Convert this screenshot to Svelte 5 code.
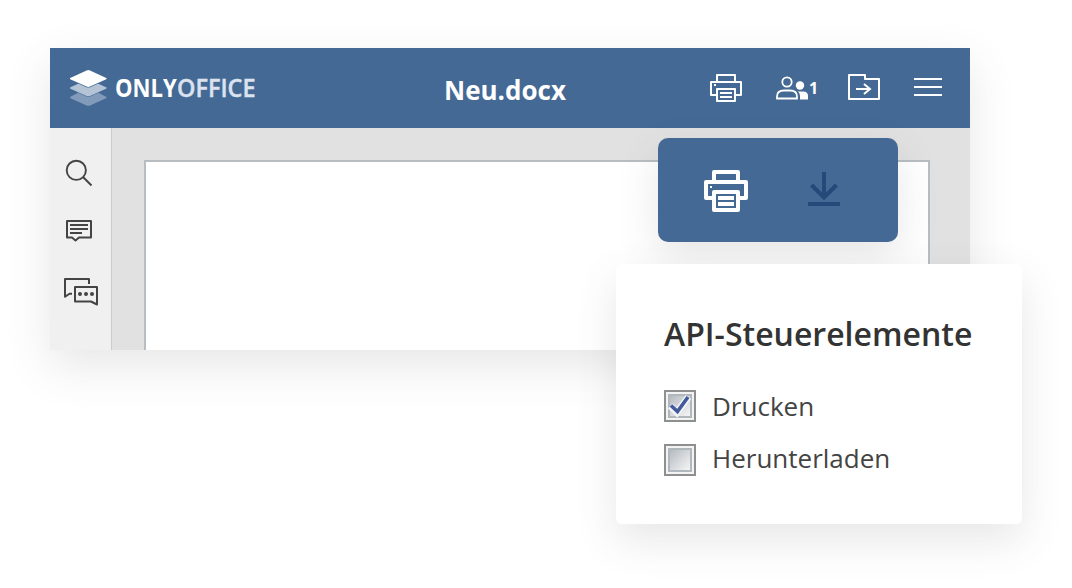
<script>
  let options = $state([
    { label: 'Drucken', checked: true },
    { label: 'Herunterladen', checked: false }
  ]);
</script>

<main class="stage">
  <section class="editor">
    <header class="toolbar">
      <div class="brand">
        <svg class="stack" width="38" height="38" viewBox="0 0 38 38">
          <path d="M1 28 L19.3 18.5 L37.500 28 Q38 28.600 37 29.200 L21 36.400 Q19.300 37.200 17.600 36.400 L1.500 29.200 Q.5 28.600 1 28Z" fill="#829bba" />
          <path d="M1 18.500 L19.300 10 L37.500 18.500 Q38 19.200 37 19.800 L21 27 Q19.300 27.700 17.600 27 L1.500 19.800 Q.5 19.200 1 18.500Z" fill="#b4c3d5" stroke="#446995" stroke-width="1.200" paint-order="stroke" />
          <path d="M1.200 9 L17.600 1.400 Q19.300 .6 21 1.400 L37.300 9 Q38 9.600 37.300 10.200 L21 17.600 Q19.300 18.400 17.600 17.600 L1.200 10.200 Q.5 9.600 1.200 9Z" fill="#fff" stroke="#446995" stroke-width="1.200" paint-order="stroke" />
        </svg>
        <svg class="wordmark" width="150" height="40" viewBox="0 0 150 40">
          <text class="strong" x="0" y="28" textLength="61.800" lengthAdjust="spacingAndGlyphs" fill="#fff">ONLY</text>
          <text x="62" y="28" textLength="78.500" lengthAdjust="spacingAndGlyphs" fill="#dce2ee" stroke="#dce2ee" stroke-width="0.400">OFFICE</text>
        </svg>
      </div>
      <h1>Neu.docx</h1>
      <nav>
        <svg width="32" height="28" viewBox="0 0 32 28" fill="none" stroke="#fff" stroke-width="2" stroke-linejoin="round">
          <path d="M7 8V1H25V8M7 21H1V8H31V21H25" />
          <path d="M7 15H25V27H7ZM10 19H22M10 23H22" />
          <path d="M4 11H6" />
        </svg>
        <div class="users">
          <svg width="33" height="24" viewBox="0 0 33 24">
            <circle cx="11" cy="6" r="4.700" fill="none" stroke="#fff" stroke-width="1.800" />
            <path d="M1 22.500V20.500C1 16.500 4 14.500 8 14.500H14C18 14.500 21 16.500 21 20.500V22.500Z" fill="none" stroke="#fff" stroke-width="1.800" />
            <circle cx="24" cy="9.500" r="4.200" fill="#fff" />
            <path d="M21.800 15.500H27C30.500 15.500 32 17.200 32 19.500V23.400H24V20.500C24 18 23.200 16.500 21.800 15.500Z" fill="#fff" />
          </svg>
          <span>1</span>
        </div>
        <svg class="folder" width="32" height="26" viewBox="0 0 32 26" fill="none" stroke="#fff" stroke-width="2" stroke-linejoin="round">
          <path d="M1 1H17V5H31V25H1Z" />
          <path d="M8 15H22M16 10L22 15L16 20" stroke-linejoin="miter" />
        </svg>
        <svg class="menu" width="28" height="18" viewBox="0 0 28 18" stroke="#fff" stroke-width="2">
          <path d="M0 1H28M0 9H28M0 17H28" />
        </svg>
      </nav>
    </header>
    <div class="workspace">
      <aside>
        <svg width="28" height="28" viewBox="0 0 28 28" fill="none" stroke="#444" stroke-width="1.900">
          <circle cx="11.300" cy="11.300" r="9.600" />
          <path d="M18 18L26.500 26.500" />
        </svg>
        <svg class="comment" width="28" height="22" viewBox="0 0 28 22" fill="none" stroke="#444" stroke-width="2" stroke-linejoin="round">
          <path d="M2 1H26V17.500H14L10.500 20.500L7 17.500H2Z" />
          <path d="M5 5H23M5 9H23M5 13H17" />
        </svg>
        <svg class="chat" width="34" height="28" viewBox="0 0 34 28" fill="none" stroke="#444" stroke-width="2" stroke-linejoin="round">
          <path d="M25 6V1H1V18.800L5.500 15.700H8" />
          <path d="M11 9H33V26.500L27 23.500H11Z" />
          <g fill="#444" stroke="none"><circle cx="16" cy="16" r="2" /><circle cx="22" cy="16" r="2" /><circle cx="28" cy="16" r="2" /></g>
        </svg>
      </aside>
      <div class="canvas"><div class="page"></div></div>
    </div>
  </section>

  <div class="popup">
    <svg width="44" height="42" viewBox="0 0 44 42" fill="none" stroke="#fff" stroke-width="4" stroke-linejoin="round">
      <path d="M10 12V2H34V12M10 28V38M10 28H2V12H42V28H34" />
      <path d="M10 22H34V40H10Z" />
      <path d="M14 28H30M14 34H30" />
      <path d="M6 17H8" stroke-width="2" />
    </svg>
    <svg class="download" width="32" height="34" viewBox="0 0 32 34" fill="none" stroke="#254a7a" stroke-width="4">
      <path d="M16 0V26M3.500 13L16 25.500L28.500 13M0 32H32" />
    </svg>
  </div>

  <section class="card">
    <h2>API-Steuerelemente</h2>
    <div class="options">
      {#each options as option}
        <button class="option" onclick={() => (option.checked = !option.checked)}>
          <span class="box">
            <span class="well"></span>
            {#if option.checked}
              <svg class="tick" width="28" height="28" viewBox="0 0 28 28" fill="none">
                <path d="M4.500 14L11 20.500L22.500 5" stroke="#f3f4f6" stroke-width="7" />
                <path d="M5 13.500L11.500 19.500L22 5" stroke="#435b9c" stroke-width="3.600" />
              </svg>
            {/if}
          </span>
          <span class="label">{option.label}</span>
        </button>
      {/each}
    </div>
  </section>
</main>

<style>
  :global(body) { margin: 0; background: #fff; }
  svg { display: block; flex: none; }
  h1, h2 { margin: 0; }
  .stage {
    --shadow: 0 16px 42px rgba(85, 85, 85, 0.14);
    position: relative;
    box-sizing: border-box;
    width: 1072px;
    height: 588px;
    padding: 48px 102px 0 50px;
    overflow: hidden;
    font-family: "Open Sans", "Noto Sans", sans-serif;
    color: #444;
  }
  .editor {
    height: 302px;
    display: flex;
    flex-direction: column;
    box-shadow: var(--shadow);
  }
  .toolbar {
    box-sizing: border-box;
    height: 80px;
    flex: none;
    display: grid;
    grid-template-columns: 1fr auto 1fr;
    align-items: center;
    padding: 0 28px 0 19px;
    background: #446995;
    color: #fff;
  }
  .brand { display: flex; align-items: center; gap: 8px; }
  .wordmark { font: 600 25px "Open Sans", sans-serif; margin-top: 2px; overflow: visible; }
  .strong { font-weight: 700; }
  h1 { font-size: 26px; line-height: 36px; font-weight: 700; padding-top: 3px; margin-left: -1px; }
  nav { display: flex; align-items: center; justify-content: flex-end; }
  .users { display: flex; align-items: center; margin-left: 34px; width: 72px; }
  .users span { font-size: 16px; line-height: 20px; font-weight: 700; margin-left: 0; }
  .folder { margin-top: -2px; }
  .menu { margin: -2px 0 0 34px; }
  .workspace { flex: 1; min-height: 0; display: flex; }
  aside {
    box-sizing: border-box;
    width: 62px;
    padding: 31px 0 0 14px;
    display: flex;
    flex-direction: column;
    background: #f0f0f0;
    border-right: 1px solid #c9cbcd;
  }
  aside svg:first-child { margin-left: 1px; }
  .comment { margin: 33px 0 0 1px; }
  .chat { margin-top: 36px; }
  .canvas { flex: 1; display: flex; padding: 32px 40px 0 32px; background: #e1e1e1; }
  .page { flex: 1; background: #fff; border: 2px solid #b8bdc1; border-bottom: 0; }
  .popup {
    position: absolute;
    left: 658px;
    top: 138px;
    box-sizing: border-box;
    width: 240px;
    height: 104px;
    padding: 2px 12px 0 0;
    display: flex;
    align-items: center;
    justify-content: center;
    gap: 60px;
    border-radius: 10px;
    background: #446995;
    box-shadow: var(--shadow);
  }
  .download { margin-top: -4px; }
  .card {
    position: absolute;
    left: 616px;
    top: 264px;
    box-sizing: border-box;
    width: 406px;
    height: 260px;
    padding: 48px 48px 0;
    border-radius: 6px;
    background: #fff;
    box-shadow: var(--shadow);
  }
  h2 { font-size: 32px; line-height: 44px; font-weight: 600; color: #333; white-space: nowrap; }
  .options { display: flex; flex-direction: column; gap: 22px; margin-top: 34px; }
  .option {
    display: flex;
    align-items: center;
    gap: 16px;
    height: 32px;
    padding: 0;
    border: 0;
    background: none;
    font: inherit;
    color: inherit;
    text-align: left;
  }
  .box {
    position: relative;
    box-sizing: border-box;
    width: 32px;
    height: 32px;
    padding: 2px;
    border: 2px solid #8e8f8f;
    background: #f3f3f3;
  }
  .well {
    display: block;
    box-sizing: border-box;
    width: 24px;
    height: 24px;
    border: 2px solid #b0b7bd;
    background: linear-gradient(135deg, #b5bbc1, #f5f5f6);
  }
  .tick { position: absolute; left: 0; top: 0; }
  .label { font-size: 26px; line-height: 32px; }
  .option + .option .label { margin-top: -4px; }
</style>
